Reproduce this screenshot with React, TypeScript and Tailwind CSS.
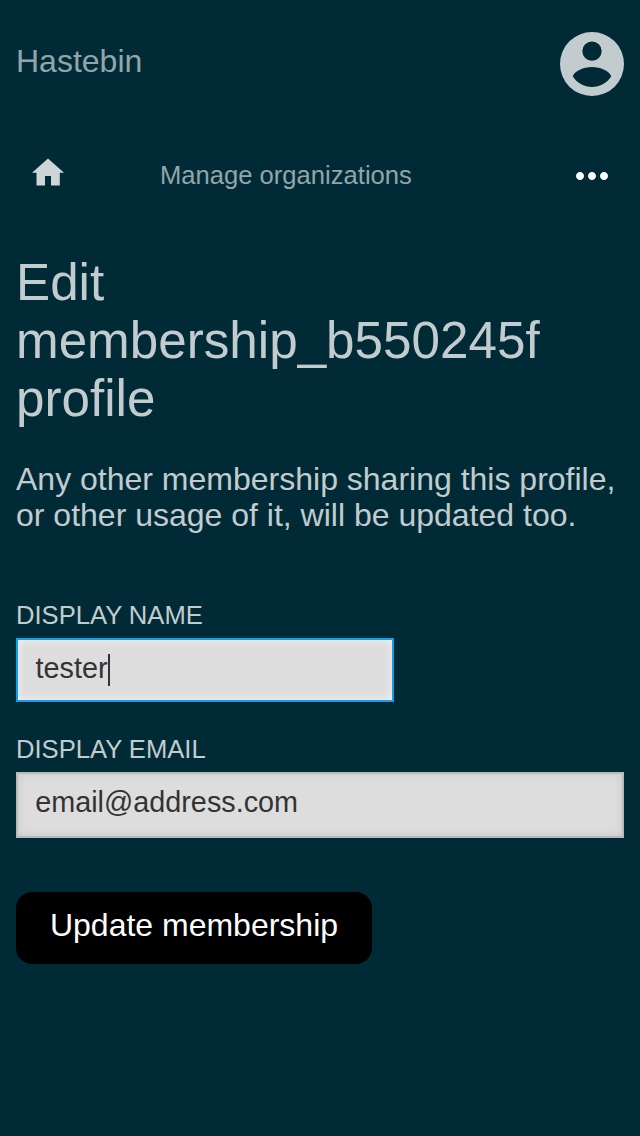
import { MdMoreHoriz } from "react-icons/md";

export default function App() {
  return (
    <div className="h-[1136px] w-[640px] overflow-hidden bg-[#002b36] px-4 font-['Liberation_Sans',sans-serif] text-[#c2cccf]">
      <header className="flex h-32 items-center justify-between">
        <span className="pb-1.5 text-[32px] leading-9 text-[#93a5aa]">Hastebin</span>
        <svg viewBox="0 0 64 64" className="size-16" aria-label="Account">
          <path fill="currentColor" fillRule="evenodd" d="M32 0a32 32 0 1 0 0 64a32 32 0 0 0 0-64zM32 9.4a9.7 9.7 0 1 1 0 19.4a9.7 9.7 0 0 1 0-19.4zM32 35c9 0 17 4 19.300 9.200c-4 6.400-11.300 10.800-19.300 10.800s-15.300-4.400-19.300-10.800c2.300-5.200 10.300-9.200 19.300-9.200z" />
        </svg>
      </header>
      <nav className="flex h-24 items-center pl-4">
        <svg viewBox="0 0 32 28" className="mb-2 h-7 w-8 text-[#cdd5d7]" aria-label="Home">
          <path fill="currentColor" d="M16 .5 32 14.800h-4.200v12.700h-8.800v-9.500h-6v9.500H4.500V14.800H0z" />
        </svg>
        <span className="mb-0.5 ml-24 text-[25.6px] leading-8 text-[#93a5aa]">Manage organizations</span>
        <MdMoreHoriz className="mr-2 ml-auto size-12 text-white" />
      </nav>
      <h1 className="mt-[30px] text-[51.2px] leading-[58px]">
        Edit<br />membership_b550245f<br />profile
      </h1>
      <p className="mt-[33px] text-[32px] leading-9">
        Any other membership sharing this profile, or other usage of it, will be updated too.
      </p>
      <form className="mt-[67px]">
        <div className="text-[25.6px] leading-[30px]">DISPLAY NAME</div>
        <div className="mt-2 flex h-16 w-[378px] items-center border-2 border-[#109fec] bg-[#ddd] pb-[3px] pl-[17.600px] text-[28.8px] text-[#333] shadow-[inset_0_0_8px_#f4f4f4]">
          <span>tester</span><span className="mt-0.5 h-8 w-0.5 bg-[#333]" />
        </div>
        <div className="mt-8 text-[25.6px] leading-[30px]">DISPLAY EMAIL</div>
        <div className="mt-2 flex h-[66px] items-center border-2 border-[#b7bab8] bg-[#ddd] pb-[5px] pl-[17.200px] text-[28.8px] text-[#333] shadow-[inset_0_0_8px_#c8c8c8]">
          email@address.com
        </div>
        <button type="button" className="mt-[54px] h-[72px] w-[356px] rounded-2xl bg-black pb-1.5 text-[32px] text-white">Update membership</button>
      </form>
    </div>
  );
}
